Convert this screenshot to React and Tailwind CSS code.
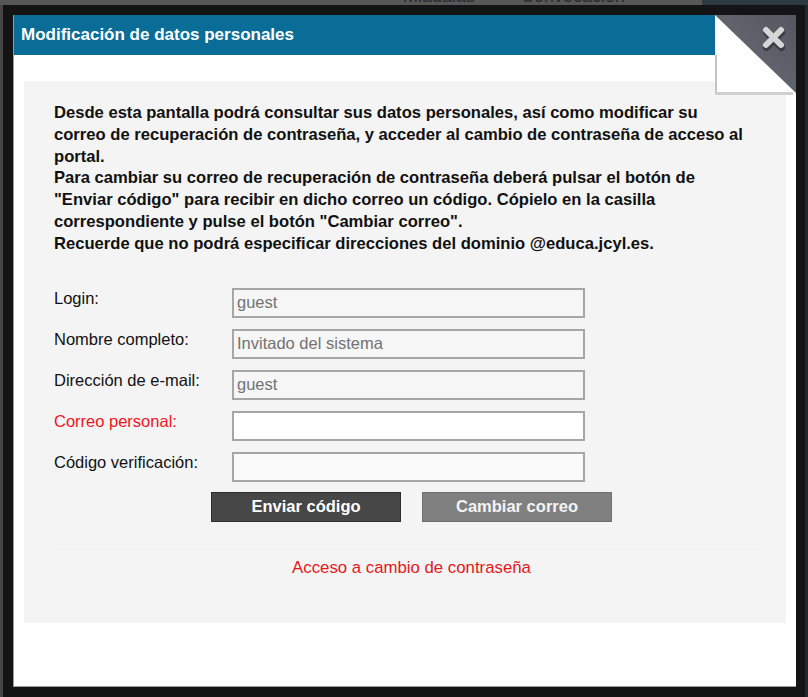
const FONT = { fontFamily: '"Liberation Sans", Arial, sans-serif' };

const intro = [
  "Desde esta pantalla podrá consultar sus datos personales, así como modificar su",
  "correo de recuperación de contraseña, y acceder al cambio de contraseña de acceso al",
  "portal.",
  "Para cambiar su correo de recuperación de contraseña deberá pulsar el botón de",
  "\"Enviar código\" para recibir en dicho correo un código. Cópielo en la casilla",
  "correspondiente y pulse el botón \"Cambiar correo\".",
  "Recuerde que no podrá especificar direcciones del dominio @educa.jcyl.es.",
];

const fields = [
  { label: "Login:", value: "guest", bg: "bg-[#f6f6f6]" },
  { label: "Nombre completo:", value: "Invitado del sistema", bg: "bg-[#f6f6f6]" },
  { label: "Dirección de e-mail:", value: "guest", bg: "bg-[#f6f6f6]" },
  { label: "Correo personal:", value: "", bg: "bg-white", red: true },
  { label: "Código verificación:", value: "", bg: "bg-[#fafafa]" },
];

function CloseCorner() {
  return (
    <div className="absolute right-0 top-0 h-[80px] w-[81px]">
      <svg width="81" height="80" viewBox="0 0 81 80">
        <rect x="0" y="0" width="81" height="80" fill="#ffffff" />
        <rect x="0" y="40" width="2" height="40" fill="#c4c4c4" />
        <rect x="0" y="77" width="78" height="3" fill="#cfcfcf" />
        <defs>
          <linearGradient id="corner" x1="0" y1="1" x2="1" y2="0">
            <stop offset="0" stopColor="#6c6f78" />
            <stop offset="1" stopColor="#54575f" />
          </linearGradient>
        </defs>
        <polygon points="0,0 81,0 81,78" fill="url(#corner)" />
        <path d="M51 16 L66 31 M66 16 L51 31" stroke="#3b3d43" strokeWidth="7" strokeLinecap="round" transform="translate(0.5 1.5)" />
        <path d="M51 15 L66 30 M66 15 L51 30" stroke="#d6d6d6" strokeWidth="6" strokeLinecap="round" />
      </svg>
    </div>
  );
}

export default function App() {
  return (
    <div className="flex h-[697px] w-[808px] flex-col overflow-hidden bg-[#151515]" style={FONT}>
      <div className="flex h-[5px] shrink-0 overflow-hidden">
        <div className="flex w-[702px] bg-[#575757] text-[18px] leading-[18px] text-[#2a2a2a]">
          <span className="-mt-[13px] ml-[403px]">Miadalas</span>
          <span className="-mt-[13px] ml-[46px]">Convocación</span>
        </div>
        <div className="flex-1 bg-[#2c3b42]" />
      </div>

      <div className="flex flex-1">
        <div className="w-[3px] bg-[#454545]" />
        <div className="flex flex-1 flex-col bg-[#141414] pl-[10px] pr-[9px] pt-[10px]">
          <div className="relative flex h-[672px] flex-col border-b border-l border-[#9a9a9a] bg-white">
            <div className="flex h-[40px] w-[702px] items-center bg-[#0a6d97] pl-[7px] text-[17px] font-bold text-white">
              Modificación de datos personales
            </div>

            <div className="mx-[10px] mt-[26px] flex h-[542px] flex-col bg-[#f4f4f4] pl-[30px] pr-[13px] pt-[21px]">
              <div className="text-[16.6px] font-bold leading-[21.8px] text-[#111]">
                {intro.map((line) => (
                  <div key={line} className="whitespace-nowrap">
                    {line}
                  </div>
                ))}
              </div>

              <div className="mt-[33px] flex flex-col gap-[11px]">
                {fields.map((f) => (
                  <div key={f.label} className="flex items-start">
                    <div
                      className={`w-[178px] pt-[1px] text-[16.5px] leading-[19px] ${
                        f.red ? "text-[#f0141e]" : "text-[#111]"
                      }`}
                    >
                      {f.label}
                    </div>
                    <div
                      className={`flex h-[30px] w-[353px] items-center border-2 border-[#a6a6a6] pl-[3px] text-[16.5px] text-[#727272] ${f.bg}`}
                    >
                      {f.value}
                    </div>
                  </div>
                ))}
              </div>

              <div className="mr-[4px] mt-[10px] flex justify-center gap-[21px]">
                <button className="h-[30px] w-[190px] border border-[#2e2e2e] bg-[#474747] text-[16.5px] font-bold text-white">
                  Enviar código
                </button>
                <button className="h-[30px] w-[190px] border border-[#6e6e6e] bg-[#808080] text-[16.5px] font-bold text-[#f4f4f4]">
                  Cambiar correo
                </button>
              </div>

              <div className="mr-[13px] mt-[29px] border-t border-[#f8f8f8]" />
              <div className="mr-[4px] mt-[3px] text-center text-[16.8px] text-[#e3191b]">
                Acceso a cambio de contraseña
              </div>
            </div>

            <CloseCorner />
          </div>
        </div>
        <div className="w-[3px] bg-[#1d2a30]" />
      </div>
    </div>
  );
}
